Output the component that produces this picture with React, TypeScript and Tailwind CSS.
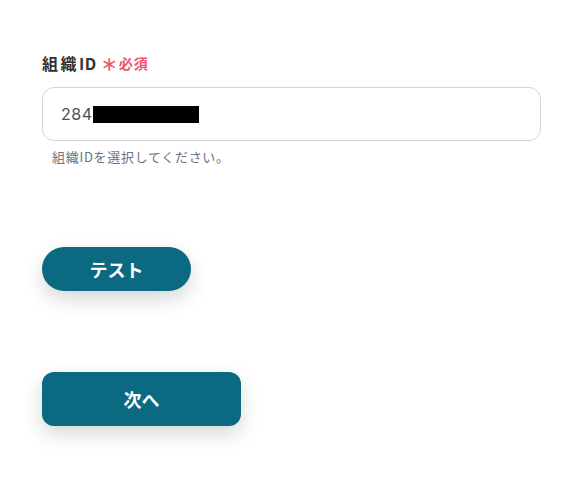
import React from "react";

export default function App() {
  return (
    <div
      className="w-[582px] h-[480px] bg-white pl-[42px] pr-[41px] pt-[52px]"
      style={{ fontFamily: '"Noto Sans CJK JP", "Noto Sans", sans-serif' }}
    >
      <div className="flex items-center h-[22px]">
        <span className="text-[16px] font-bold text-[#333333] tracking-[2.5px]">組織</span>
        <span className="text-[16px] font-bold text-[#333333] tracking-[0.5px]">ID</span>
        <span className="ml-[4px] text-[17px] font-bold text-[#f0556b] leading-none">＊</span>
        <span className="ml-[1px] text-[14px] font-bold text-[#f0556b] tracking-[1px]">必須</span>
      </div>
      <div className="mt-[13px] h-[54px] w-[499px] rounded-[12px] border border-[#d1d5db] flex items-center pl-[18px]">
        <span className="text-[16px] text-[#4b5058] tracking-[0.5px]" style={{ fontFamily: 'Inter, "Noto Sans", sans-serif' }}>284</span>
        <span className="inline-block w-[106px] h-[17px] bg-black"></span>
      </div>
      <div className="mt-[7px] pl-[10px] text-[13px] text-[#6b7280] h-[18px] leading-[18px] tracking-[0.7px]">
        組織IDを選択してください。
      </div>
      <button className="mt-[81px] w-[149px] h-[44px] rounded-full bg-[#0b6981] text-white text-[18px] font-bold flex items-center justify-center shadow-[0_8px_20px_rgba(0,0,0,0.16)]">
        テスト
      </button>
      <button className="mt-[81px] w-[199px] h-[54px] rounded-[12px] bg-[#0b6981] text-white text-[18px] font-bold flex items-center justify-center shadow-[0_8px_20px_rgba(0,0,0,0.16)]">
        次へ
      </button>
    </div>
  );
}
